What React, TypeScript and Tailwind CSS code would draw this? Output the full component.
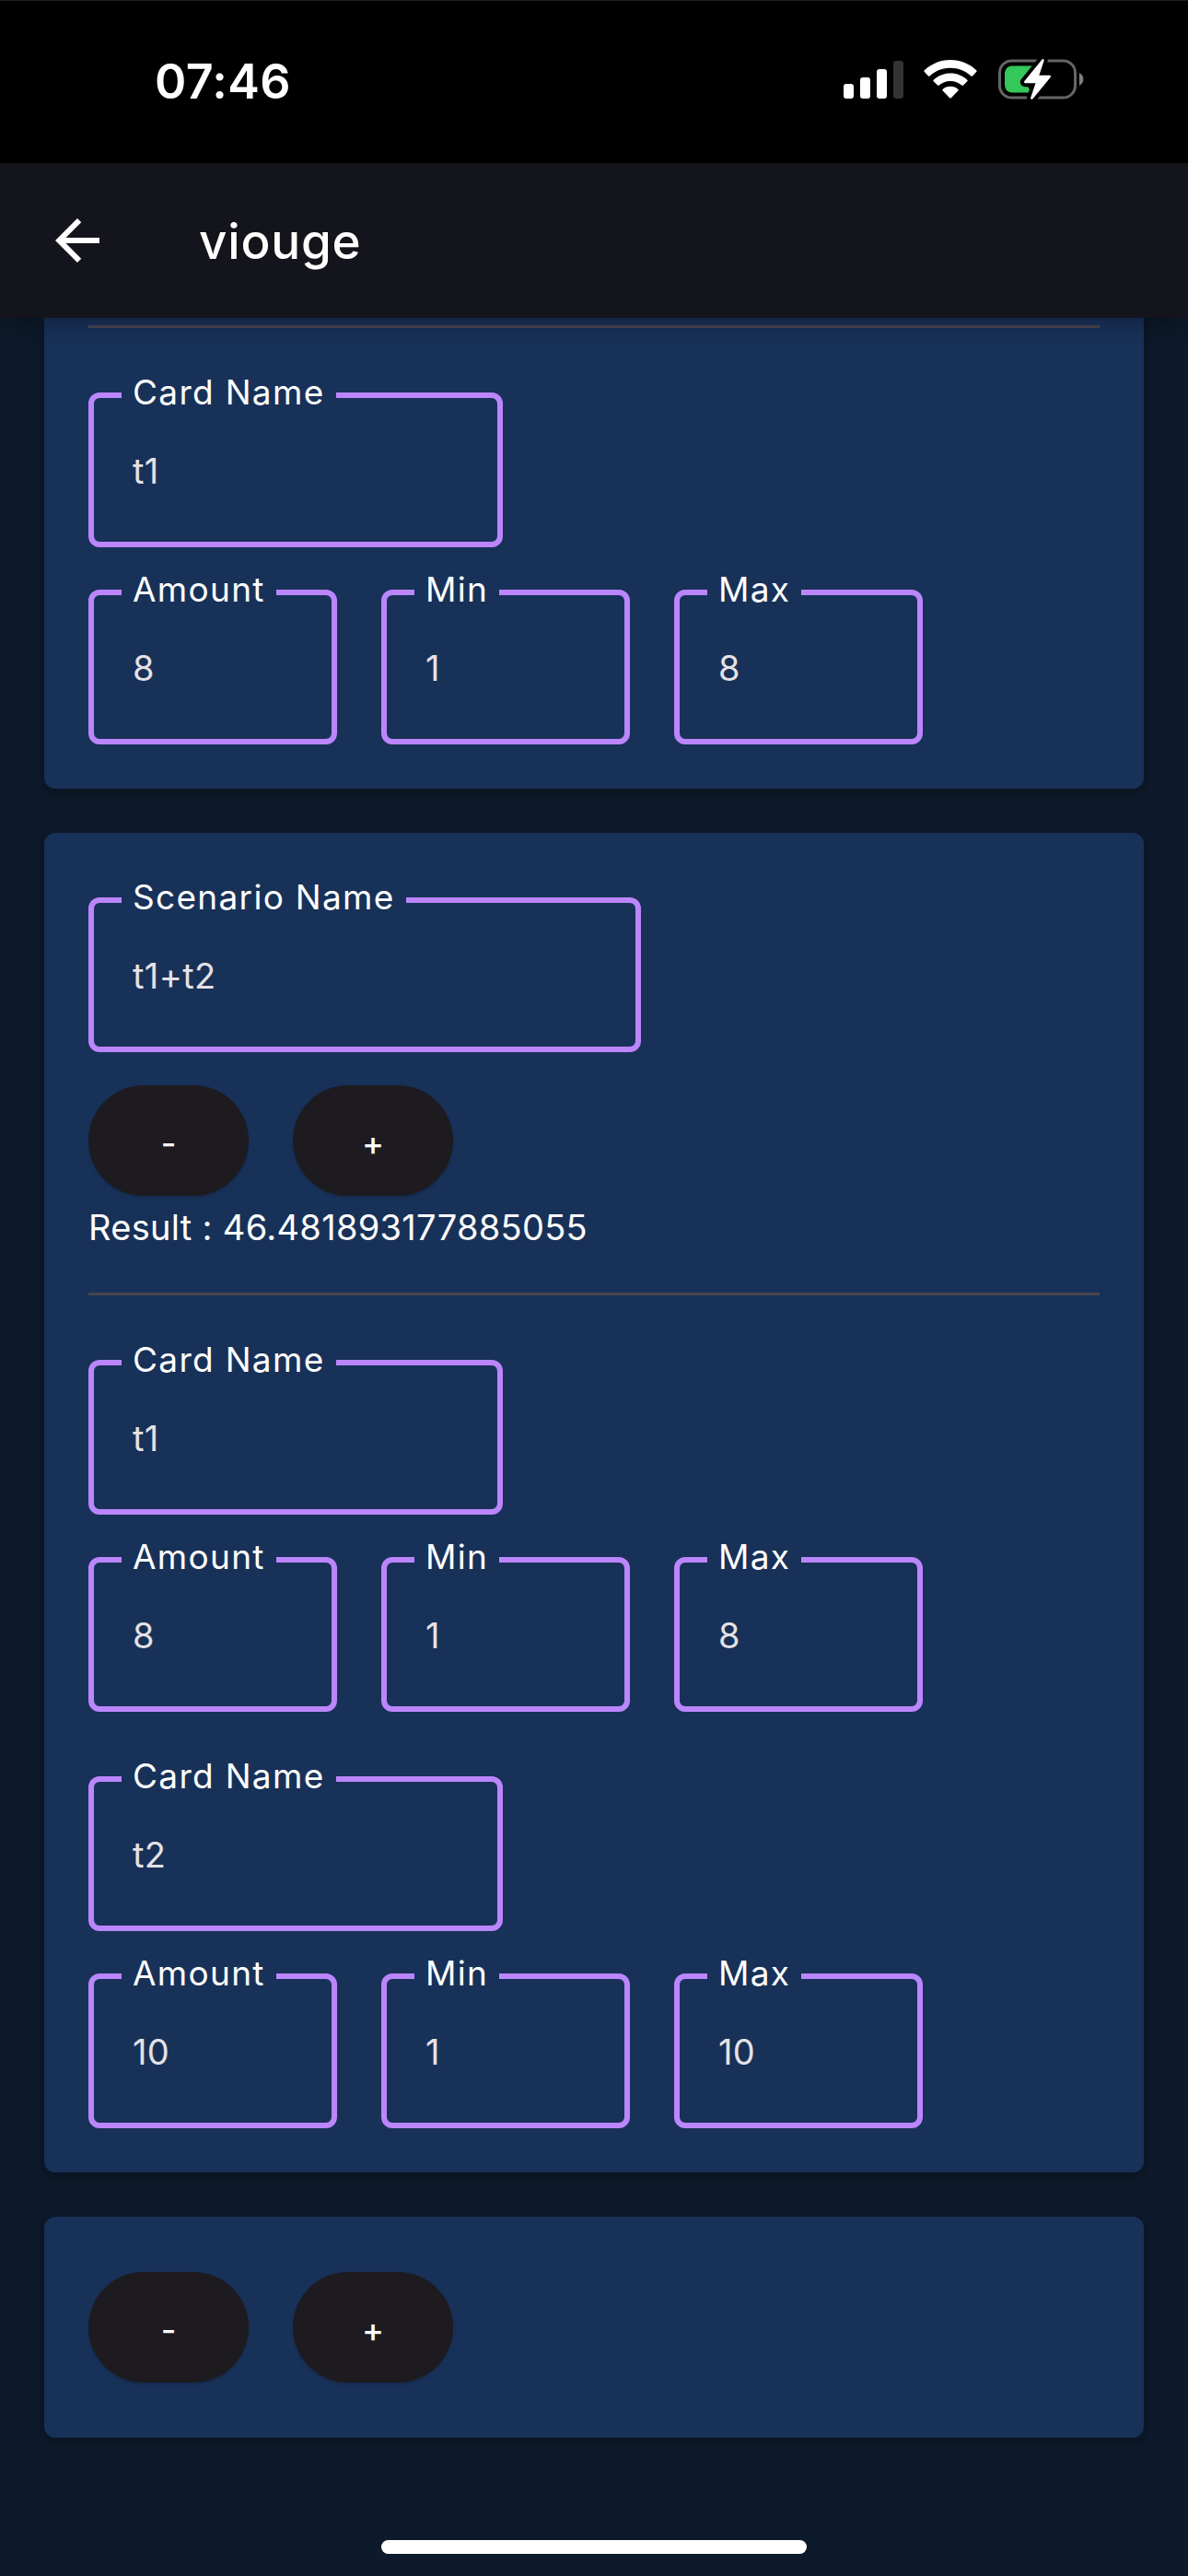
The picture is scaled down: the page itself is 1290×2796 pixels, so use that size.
type FieldProps = { label: string; value: string; width: string };

function Field({ label, value, width }: FieldProps) {
  return (
    <fieldset className={`${width} h-[168px] rounded-[12px] border-[6px] border-[#bb86fc]`}>
      <legend className="ml-[30px] h-[6px] whitespace-nowrap px-3 text-[37px] leading-[0px] tracking-[1.3px] text-white">
        {label}
      </legend>
      <div className="flex h-[156px] items-center pl-[42px] pt-px text-[38px] leading-[38px] tracking-[0.4px] text-[#e6e1e5]">
        {value}
      </div>
    </fieldset>
  );
}

type CardInfo = { name: string; amount: string; min: string; max: string };

function CardFields({ name, amount, min, max }: CardInfo) {
  return (
    <div className="flex flex-col gap-[46px]">
      <Field label="Card Name" value={name} width="w-[450px]" />
      <div className="flex gap-12">
        <Field label="Amount" value={amount} width="w-[270px]" />
        <Field label="Min" value={min} width="w-[270px]" />
        <Field label="Max" value={max} width="w-[270px]" />
      </div>
    </div>
  );
}

function RoundButton({ children }: { children: string }) {
  return (
    <button className="flex h-[120px] w-[174px] items-center justify-center rounded-full bg-[#1d1b20] pt-1.5 text-[36px] font-medium leading-none text-white shadow-[0_2px_3px_rgba(0,0,0,0.15)]">
      {children}
    </button>
  );
}

function Buttons() {
  return (
    <div className="flex gap-12">
      <RoundButton>-</RoundButton>
      <RoundButton>+</RoundButton>
    </div>
  );
}

function Signal() {
  return (
    <svg width="65" height="41" viewBox="0 0 65 41" fill="#fff">
      <rect x="0" y="25" width="11" height="16" rx="3" />
      <rect x="18" y="18" width="11" height="23" rx="3" />
      <rect x="36" y="9" width="11" height="32" rx="3" />
      <rect x="54" y="0" width="11" height="41" rx="3" fill="#333" />
    </svg>
  );
}

function Wifi() {
  return (
    <svg width="58" height="42" viewBox="0 0 58 42" fill="#fff">
      <path d="M29 0C40 0 50 4.300 57.200 11.300Q58 12.200 57.200 13L53 17.400Q52.200 18.200 51.300 17.400C45.500 12 37.500 8.800 29 8.800S12.500 12 6.700 17.400Q5.800 18.200 5 17.400L.8 13Q0 12.200 .8 11.300C8 4.300 18 0 29 0Z" />
      <path d="M29 14.500C36 14.500 42.500 17.200 47.300 21.700Q48 22.500 47.300 23.300L43 27.600Q42.200 28.400 41.300 27.600C38 24.700 33.700 23 29 23S20 24.700 16.700 27.600Q15.800 28.400 15 27.600L10.700 23.300Q10 22.500 10.700 21.700C15.500 17.200 22 14.500 29 14.500Z" />
      <path d="M29 28.800C32.200 28.800 35.200 30 37.400 31.900Q38.200 32.700 37.400 33.500L29.800 41.300Q29 42 28.200 41.300L20.600 33.500Q19.800 32.700 20.600 31.900C22.800 30 25.800 28.800 29 28.800Z" />
    </svg>
  );
}

function Battery() {
  const bolt = "M47.800 .2Q49.800 -.3 49.700 1.700L44.300 17.800H56Q57.700 18.200 56.800 19.700L37.500 43.300Q35.500 44.600 35 42.500L40.500 26.200H29Q27.200 25.700 28.200 24.200Z";
  return (
    <svg width="95" height="46" viewBox="0 -1 95 46">
      <rect x="1.500" y="2" width="82" height="40" rx="13" fill="none" stroke="#666" strokeWidth="3" />
      <path d="M88 15.200A7.500 7.500 0 0 1 88 28.800Z" fill="#808080" />
      <rect x="7" y="7.500" width="38" height="29" rx="8" fill="#34c759" />
      <path d="M36 37L31 28L42 20L46 7H47V37Z" fill="#000" />
      <path d={bolt} fill="#fff" stroke="#000" strokeWidth="8" strokeLinejoin="round" />
      <path d={bolt} fill="#fff" />
    </svg>
  );
}

function StatusBar() {
  return (
    <div className="flex h-[177px] items-start justify-between border-t border-[#1c1c20] bg-black pl-[168px] pr-[111px]">
      <div className="mt-[61px] text-[52px] font-semibold leading-[54px] tracking-[0.4px] text-white">07:46</div>
      <div className="mt-[62px] flex items-center">
        <Signal />
        <div className="ml-[22px]"><Wifi /></div>
        <div className="ml-[23px]"><Battery /></div>
      </div>
    </div>
  );
}

function AppBar() {
  return (
    <header className="relative z-10 flex h-[168px] items-center bg-[#14141c] pl-12 shadow-[0_4px_24px_rgba(0,0,0,0.3)]">
      <svg width="72" height="72" viewBox="0 0 24 24" fill="#fff">
        <path d="M20 11H7.830l5.590-5.590L12 4l-8 8 8 8 1.410-1.410L7.830 13H20v-2z" />
      </svg>
      <h1 className="ml-24 pt-0.5 text-[53px] font-medium leading-none tracking-[0.8px] text-white">viouge</h1>
    </header>
  );
}

export default function App() {
  return (
    <div className="flex h-[2796px] w-[1290px] flex-col overflow-hidden bg-[#0d1a2b] font-['Inter',sans-serif]">
      <StatusBar />
      <AppBar />
      <main className="flex grow flex-col gap-12 px-12">
        <section className="rounded-b-[12px] bg-[#183158] px-12 pb-12 pt-2 shadow-[0_4px_14px_rgba(0,0,0,0.3)]">
          <hr className="mb-[70px] h-[3px] border-0 bg-[#49454f]" />
          <CardFields name="t1" amount="8" min="1" max="8" />
        </section>
        <section className="flex flex-col rounded-[12px] bg-[#183158] px-12 pb-12 pt-[70px] shadow-[0_4px_14px_rgba(0,0,0,0.3)]">
          <Field label="Scenario Name" value="t1+t2" width="w-[600px]" />
          <div className="mt-9"><Buttons /></div>
          <p className="mt-[13px] h-[92px] text-[38px] leading-[42px] tracking-[0.3px] text-white">Result : 46.481893177885055</p>
          <hr className="mb-[70px] h-[3px] border-0 bg-[#49454f]" />
          <div className="flex flex-col gap-[70px]">
            <CardFields name="t1" amount="8" min="1" max="8" />
            <CardFields name="t2" amount="10" min="1" max="10" />
          </div>
        </section>
        <section className="rounded-[12px] bg-[#183158] px-12 py-[60px] shadow-[0_4px_14px_rgba(0,0,0,0.3)]">
          <Buttons />
        </section>
        <div className="mb-6 mt-auto h-[15px] w-[462px] self-center rounded-full bg-white" />
      </main>
    </div>
  );
}
